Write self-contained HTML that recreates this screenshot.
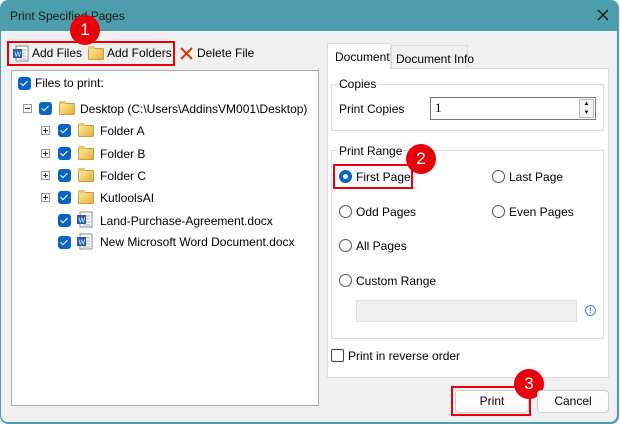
<!DOCTYPE html>
<html><head><style>
*{box-sizing:border-box;margin:0;padding:0}
body{width:620px;height:424px;background:#fff;font-family:"Liberation Sans",sans-serif;font-size:12px;color:#000;position:relative;overflow:hidden}
.win{position:absolute;left:0;top:0;width:619px;height:424px;background:#4c9eac;border-radius:8px 8px 8px 8px}
.client{position:absolute;left:1px;top:31px;width:616px;height:391px;background:#f0f0f0;border-radius:0 0 7px 7px}
.a{position:absolute;white-space:nowrap}
.cb{position:absolute;width:13px;height:13px;background:#0a64c4;border-radius:3px}
.cb::after{content:"";position:absolute;left:4px;top:2px;width:3px;height:6px;border:solid #fff;border-width:0 1.2px 1.2px 0;transform:rotate(45deg)}
.pm{position:absolute;width:9px;height:9px;border:1px solid #999;background:#fff}
.pm::before{content:"";position:absolute;left:1px;top:3px;width:5px;height:1px;background:#333}
.plus::after{content:"";position:absolute;left:3px;top:1px;width:1px;height:5px;background:#333}
.fold{position:absolute;width:16px;height:12px;background:linear-gradient(135deg,#fde89a,#e3b23c);border:1px solid #c9a040;border-radius:1px}
.fold::before{content:"";position:absolute;left:-1px;top:-3px;width:7px;height:3px;background:#e8c66a;border-radius:1px 1px 0 0}
.doc{position:absolute;width:16px;height:16px}
.badge{position:absolute;width:30px;height:30px;border-radius:50%;background:#e8000b;color:#fff;font-size:17px;text-align:center;line-height:30px}
.redbox{position:absolute;border:2px solid #e8000b}
.radio{position:absolute;width:13px;height:13px;border:1px solid #555;border-radius:50%;background:#fff}
.radio.on{border:4px solid #0a64c4}
.grp{position:absolute;border:1px solid #dcdcdc}
.btn{position:absolute;background:#fdfdfd;border:1px solid #d0d0d0;border-radius:4px;text-align:center;line-height:21px}
</style></head><body>
<div class="win"></div>
<div class="a" style="left:10px;top:9px;font-size:12px;color:#1a1a1a">Print Specified Pages</div>
<svg class="a" style="left:597px;top:9px" width="12" height="12"><path d="M1 1L11 11M11 1L1 11" stroke="#111" stroke-width="1.3"/></svg>
<div class="client"></div>

<!-- toolbar -->
<svg class="a" style="left:12px;top:45px" width="17" height="17"><rect x="4" y="1" width="12" height="15" fill="#fff" stroke="#888"/><path d="M7 5h7M7 8h7M7 11h7M7 14h7" stroke="#aaa"/><rect x="1" y="4" width="9" height="9" fill="#2b5ca8"/><text x="2.5" y="11.5" font-size="7" fill="#fff" font-family="Liberation Sans">W</text></svg>
<div class="a" style="left:32px;top:46px">Add Files</div>
<div class="fold" style="left:88px;top:48px"></div>
<div class="a" style="left:107px;top:46px">Add Folders</div>
<svg class="a" style="left:180px;top:47px" width="13" height="13"><path d="M1 1L12 12M12 1L1 12" stroke="#d83b01" stroke-width="2"/></svg>
<div class="a" style="left:197px;top:46px">Delete File</div>
<div class="redbox" style="left:7px;top:41px;width:168px;height:25px"></div>
<div class="badge" style="left:70px;top:15px">1</div>

<!-- tree -->
<div class="a" style="left:11px;top:70px;width:308px;height:336px;background:#fff;border:1px solid #aaa"></div>
<div class="cb" style="left:18px;top:77px"></div><div class="a" style="left:35px;top:76px">Files to print:</div>
<div class="pm" style="left:23px;top:104px"></div><div class="cb" style="left:39px;top:102px"></div><div class="fold" style="left:59px;top:103px"></div><div class="a" style="left:80px;top:102px">Desktop (C:\Users\AddinsVM001\Desktop)</div>
<div class="pm plus" style="left:41px;top:126px"></div><div class="cb" style="left:58px;top:124px"></div><div class="fold" style="left:78px;top:125px"></div><div class="a" style="left:100px;top:124px">Folder A</div>
<div class="pm plus" style="left:41px;top:149px"></div><div class="cb" style="left:58px;top:147px"></div><div class="fold" style="left:78px;top:148px"></div><div class="a" style="left:100px;top:147px">Folder B</div>
<div class="pm plus" style="left:41px;top:171px"></div><div class="cb" style="left:58px;top:169px"></div><div class="fold" style="left:78px;top:170px"></div><div class="a" style="left:100px;top:169px">Folder C</div>
<div class="pm plus" style="left:41px;top:193px"></div><div class="cb" style="left:58px;top:191px"></div><div class="fold" style="left:78px;top:192px"></div><div class="a" style="left:100px;top:191px">KutloolsAI</div>
<div class="cb" style="left:58px;top:214px"></div>
<svg class="a" style="left:76px;top:211px" width="17" height="17"><rect x="4" y="1" width="12" height="15" fill="#fff" stroke="#888"/><path d="M7 5h7M7 8h7M7 11h7M7 14h7" stroke="#aaa"/><rect x="1" y="4" width="9" height="9" fill="#2b5ca8"/><text x="2.5" y="11.5" font-size="7" fill="#fff" font-family="Liberation Sans">W</text></svg>
<div class="a" style="left:100px;top:214px">Land-Purchase-Agreement.docx</div>
<div class="cb" style="left:58px;top:236px"></div>
<svg class="a" style="left:76px;top:233px" width="17" height="17"><rect x="4" y="1" width="12" height="15" fill="#fff" stroke="#888"/><path d="M7 5h7M7 8h7M7 11h7M7 14h7" stroke="#aaa"/><rect x="1" y="4" width="9" height="9" fill="#2b5ca8"/><text x="2.5" y="11.5" font-size="7" fill="#fff" font-family="Liberation Sans">W</text></svg>
<div class="a" style="left:100px;top:235px">New Microsoft Word Document.docx</div>

<!-- tabs -->
<div class="a" style="left:327px;top:68px;width:282px;height:310px;background:#fff;border:1px solid #dcdcdc"></div>
<div class="a" style="left:327px;top:43px;width:64px;height:26px;background:#fff;border:1px solid #dcdcdc;border-bottom:none;padding:6px 0 0 7px">Document</div>
<div class="a" style="left:391px;top:45px;width:77px;height:23px;background:#f0f0f0;border:1px solid #dcdcdc;border-bottom:none;padding:6px 0 0 4px">Document Info</div>

<div class="grp" style="left:331px;top:84px;width:273px;height:47px"></div>
<div class="a" style="left:337px;top:77px;background:#fff;padding:0 2px">Copies</div>
<div class="a" style="left:339px;top:102px">Print Copies</div>
<div class="a" style="left:430px;top:97px;width:166px;height:23px;border:1px solid #7a7a7a;background:#fff;padding:2px 4px;font-family:'Liberation Serif',serif;font-size:13px">1</div>
<div class="a" style="left:579px;top:99px;width:15px;height:19px;border:1px solid #bbb;background:#f5f5f5;font-size:6px;line-height:9px;text-align:center">▲<br>▼</div>

<div class="grp" style="left:331px;top:150px;width:273px;height:189px"></div>
<div class="a" style="left:337px;top:144px;background:#fff;padding:0 2px">Print Range</div>
<div class="radio on" style="left:339px;top:170px"></div><div class="a" style="left:356px;top:170px">First Page</div>
<div class="redbox" style="left:333px;top:164px;width:80px;height:25px"></div>
<div class="badge" style="left:406px;top:144px">2</div>
<div class="radio" style="left:492px;top:170px"></div><div class="a" style="left:509px;top:170px">Last Page</div>
<div class="radio" style="left:339px;top:205px"></div><div class="a" style="left:356px;top:205px">Odd Pages</div>
<div class="radio" style="left:492px;top:205px"></div><div class="a" style="left:509px;top:205px">Even Pages</div>
<div class="radio" style="left:339px;top:239px"></div><div class="a" style="left:356px;top:239px">All Pages</div>
<div class="radio" style="left:339px;top:274px"></div><div class="a" style="left:356px;top:274px">Custom Range</div>
<div class="a" style="left:356px;top:300px;width:221px;height:22px;background:#efefef;border:1px solid #e0e0e0"></div>
<div class="a" style="left:585px;top:305px;width:11px;height:11px;border:1px solid #4a7fc8;border-radius:50%;color:#4a7fc8;font-size:8px;line-height:9px;text-align:center;font-weight:bold">!</div>

<div class="a" style="left:331px;top:349px;width:13px;height:13px;border:1px solid #444;border-radius:2px;background:#fff"></div>
<div class="a" style="left:348px;top:349px">Print in reverse order</div>

<div class="btn" style="left:455px;top:390px;width:74px;height:23px">Print</div>
<div class="redbox" style="left:451px;top:386px;width:80px;height:30px"></div>
<div class="badge" style="left:514px;top:369px">3</div>
<div class="btn" style="left:537px;top:390px;width:72px;height:23px">Cancel</div>
</body></html>
